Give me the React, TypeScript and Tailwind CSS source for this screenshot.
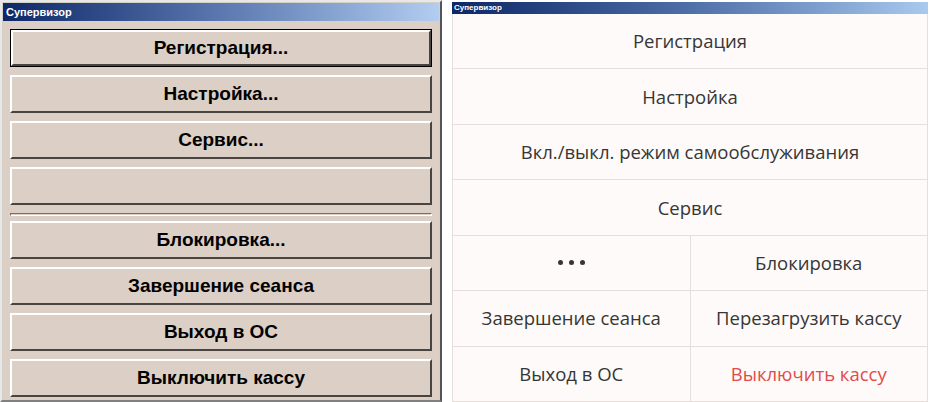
import React from "react"

const classicItems = [
  "Регистрация...",
  "Настройка...",
  "Сервис...",
  "",
]

const classicItems2 = [
  "Блокировка...",
  "Завершение сеанса",
  "Выход в ОС",
  "Выключить кассу",
]

function ClassicButton({ label, focused }: { label: string; focused?: boolean }) {
  return (
    <div className={focused ? "h-[38px] border border-black" : "h-[38px]"}>
      <div className="h-full flex items-center justify-center border-t-2 border-l-2 border-t-white border-l-white border-b-2 border-r-2 border-b-[#4a4440] border-r-[#4a4440] bg-[#dbcfc6] text-[19px] font-bold text-black">
        {label}
      </div>
    </div>
  )
}

function ClassicWindow() {
  return (
    <div className="w-[442px] h-[402px] flex flex-col bg-[#d4d0c8] border-t-2 border-l-2 border-t-[#e8e8e8] border-l-[#e8e8e8] border-r-2 border-b-2 border-r-[#555] border-b-[#808080] p-px">
      <div className="h-[18px] flex items-center px-[3px] bg-gradient-to-r from-[#0e2767] via-[#5b78b0] to-[#b3cdf0] text-white text-[11px] font-bold">
        Супервизор
      </div>
      <div className="flex-1 bg-[#dbcfc6] px-[7px] pt-[8px] flex flex-col gap-2">
        {classicItems.map((item, i) => (
          <ClassicButton key={i} label={item} focused={i === 0} />
        ))}
        <div className="h-[3px] -mb-[3px] border-t border-l border-t-[#7a6f68] border-l-[#7a6f68] border-b border-r border-b-white border-r-white" />
        {classicItems2.map((item, i) => (
          <ClassicButton key={i} label={item} />
        ))}
      </div>
    </div>
  )
}

function Cell({ children, red }: { children: React.ReactNode; red?: boolean }) {
  return (
    <div
      className={
        red
          ? "flex-1 flex items-center justify-center text-[#e14b4b]"
          : "flex-1 flex items-center justify-center text-[#363636]"
      }
    >
      {children}
    </div>
  )
}

function Dots() {
  return (
    <div className="flex gap-[6px]">
      <span className="w-[5px] h-[5px] rounded-full bg-[#363636]" />
      <span className="w-[5px] h-[5px] rounded-full bg-[#363636]" />
      <span className="w-[5px] h-[5px] rounded-full bg-[#363636]" />
    </div>
  )
}

function ModernWindow() {
  const full = ["Регистрация", "Настройка", "Вкл./выкл. режим самообслуживания", "Сервис"]
  return (
    <div className="flex-1 h-[402px] flex flex-col pt-[2px] pr-[2px]">
      <div className="h-[12px] flex items-center px-[2px] bg-gradient-to-r from-[#0e2767] via-[#4f6fa8] to-[#a9c9ee] text-white text-[8px] font-bold leading-none">
        Супервизор
      </div>
      <div
        className="flex-1 flex flex-col bg-[#fdfaf9] border-l border-r border-b border-[#e6dedb] text-[18.5px]"
        style={{ fontFamily: '"Open Sans", "Noto Sans", sans-serif' }}
      >
        {full.map((t) => (
          <div key={t} className="flex-1 flex border-b border-[#e6dedb]">
            <Cell>{t}</Cell>
          </div>
        ))}
        <div className="flex-1 flex border-b border-[#e6dedb]">
          <Cell>
            <Dots />
          </Cell>
          <div className="w-px bg-[#e6dedb]" />
          <Cell>Блокировка</Cell>
        </div>
        <div className="flex-1 flex border-b border-[#e6dedb]">
          <Cell>Завершение сеанса</Cell>
          <div className="w-px bg-[#e6dedb]" />
          <Cell>Перезагрузить кассу</Cell>
        </div>
        <div className="flex-1 flex">
          <Cell>Выход в ОС</Cell>
          <div className="w-px bg-[#e6dedb]" />
          <Cell red>Выключить кассу</Cell>
        </div>
      </div>
    </div>
  )
}

export default function App() {
  return (
    <div
      className="w-[930px] h-[402px] flex bg-white overflow-hidden"
      style={{ fontFamily: '"Liberation Sans", Arial, sans-serif' }}
    >
      <ClassicWindow />
      <div className="w-[10px]" />
      <ModernWindow />
    </div>
  )
}
